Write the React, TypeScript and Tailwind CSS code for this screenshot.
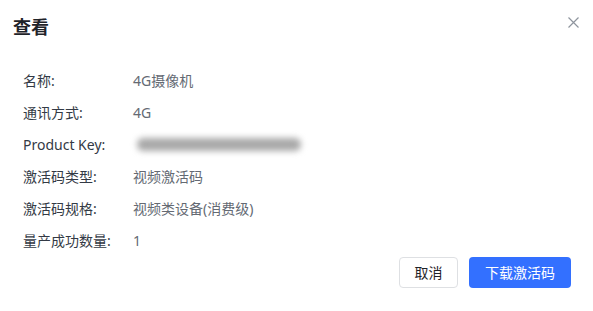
import React from 'react';

interface Field {
  label: string;
  value: string;
  masked?: boolean;
}

const fields: Field[] = [
  { label: '名称:', value: '4G摄像机' },
  { label: '通讯方式:', value: '4G' },
  { label: 'Product Key:', value: '', masked: true },
  { label: '激活码类型:', value: '视频激活码' },
  { label: '激活码规格:', value: '视频类设备(消费级)' },
  { label: '量产成功数量:', value: '1' },
];

const App = () => {
  return (
    <div
      className="relative w-[593px] h-[311px] bg-white overflow-hidden"
      style={{ fontFamily: '"Segoe UI", "Noto Sans", "Noto Sans CJK SC", sans-serif' }}
    >
      {/* Header */}
      <div className="flex items-center justify-between pl-[13px] pr-[14px] pt-[13px] h-[41px]">
        <h2 className="text-[18px] leading-[28px] font-bold text-[#1f2329]">查看</h2>
        <button className="w-[11px] h-[11px] flex items-center justify-center text-[#8f959e] -mt-[10px]">
          <svg width="11" height="11" viewBox="0 0 11 11" fill="none" stroke="currentColor" strokeWidth="1.2">
            <path d="M0.5 0.5 L10.5 10.5 M10.5 0.5 L0.5 10.5" />
          </svg>
        </button>
      </div>

      {/* Fields */}
      <div className="flex flex-col pt-[23px] pl-[23px]">
        {fields.map((f) => (
          <div key={f.label} className="flex items-center h-8 text-[14px]">
            <span className="w-[110px] text-[#333a45]">{f.label}</span>
            {f.masked ? (
              <div className="ml-[4px] w-[164px] h-[13px] bg-[#a9a9a9] rounded-[6px] blur-[3px]" />
            ) : (
              <span className="text-[#646a73]">{f.value}</span>
            )}
          </div>
        ))}
      </div>

      {/* Footer */}
      <div className="flex justify-end gap-[11px] pr-[22px] pt-px">
        <button className="w-[59px] h-[31px] rounded-[4px] border border-[#dee0e3] text-[14px] text-[#1f2329] bg-white">
          取消
        </button>
        <button className="w-[102px] h-[31px] rounded-[4px] bg-[#3370ff] text-[14px] text-white">
          下载激活码
        </button>
      </div>
    </div>
  );
};

export default App;
